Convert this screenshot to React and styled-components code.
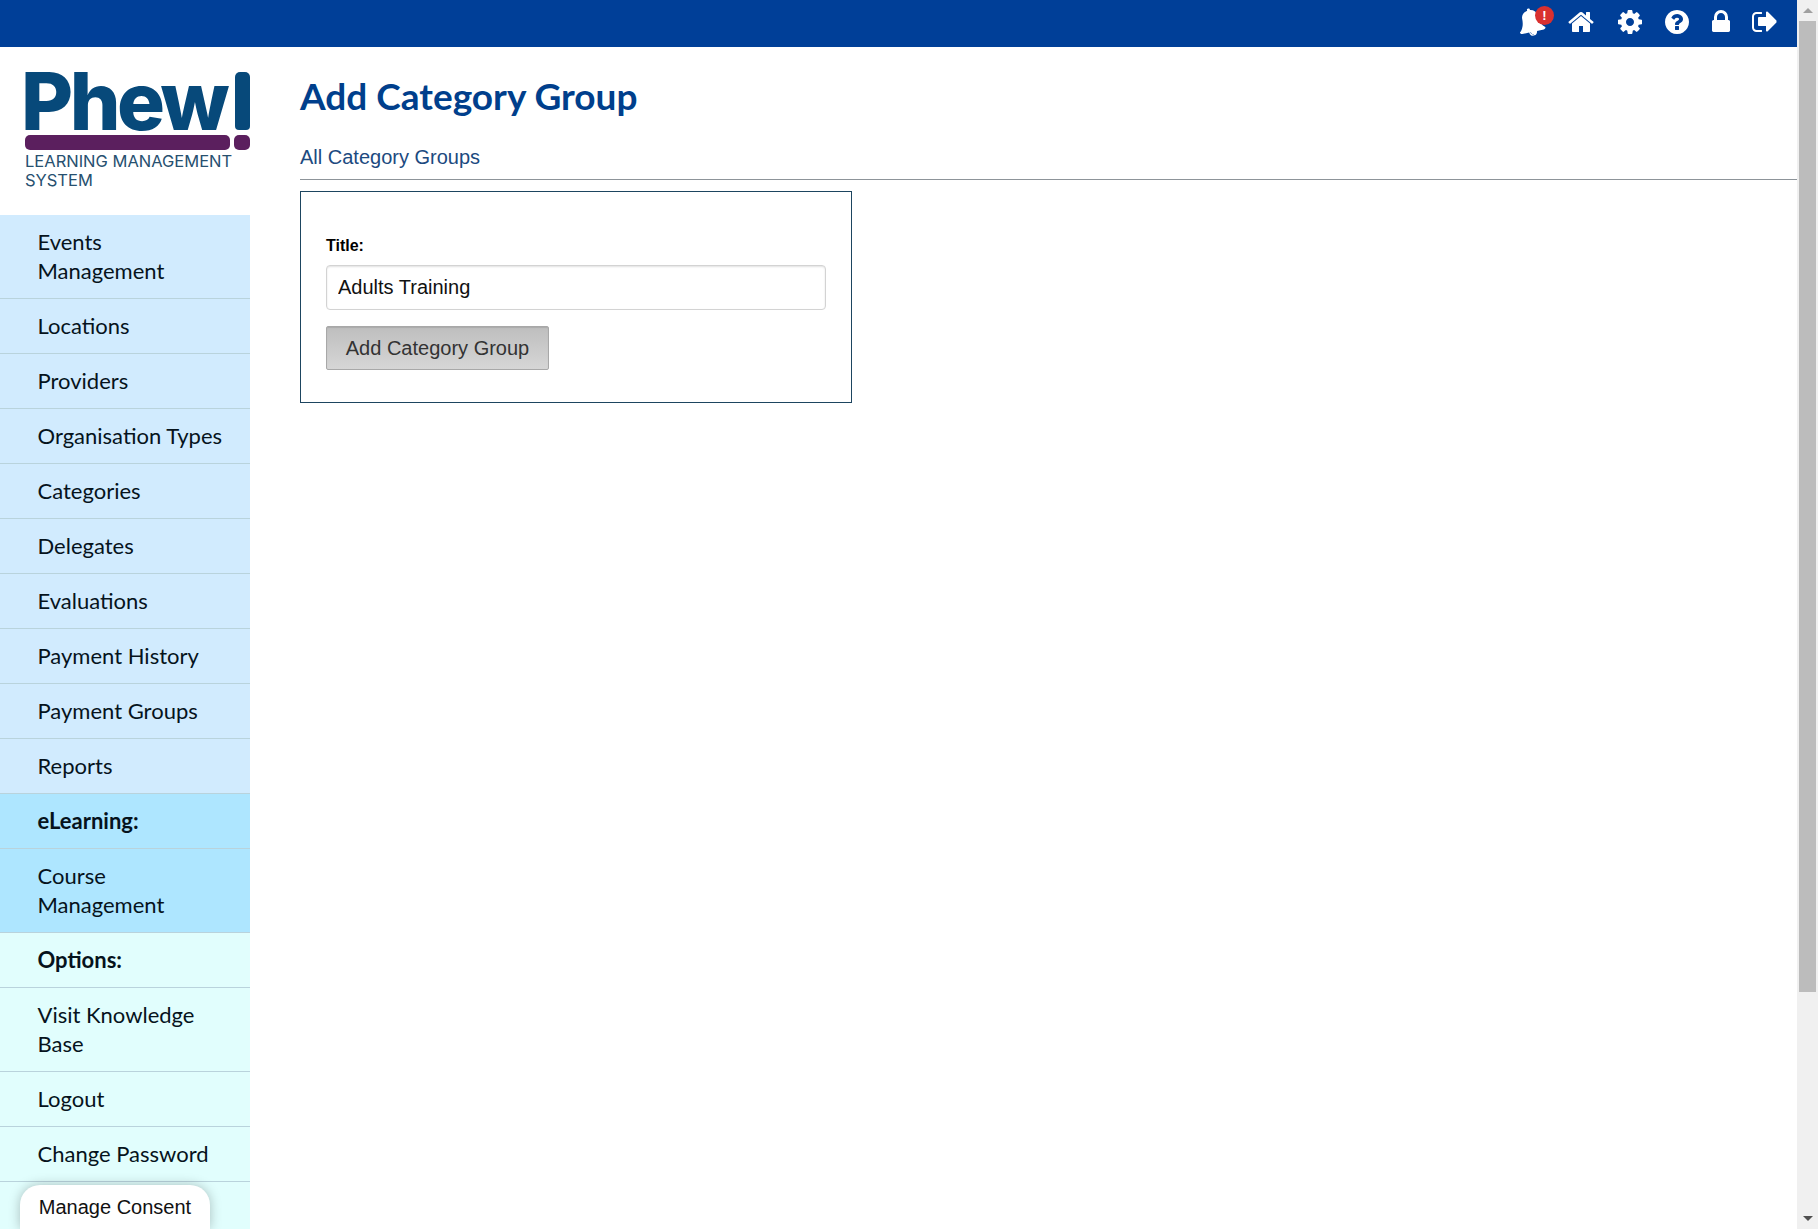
import React from "react";
import styled, { createGlobalStyle } from "styled-components";

const GlobalStyle = createGlobalStyle`
  html, body {
    margin: 0;
    padding: 0;
    height: 100%;
    overflow: hidden;
    background: #fff;
  }
  * {
    box-sizing: border-box;
  }
`;

const Page = styled.div`
  position: relative;
  display: flex;
  width: 1818px;
  height: 1229px;
  overflow: hidden;
  font-family: "Liberation Sans", Arial, sans-serif;
`;

const Window = styled.div`
  flex: 1;
  min-width: 0;
  display: flex;
  flex-direction: column;
`;

const TopBar = styled.header`
  height: 47px;
  flex: none;
  background: #003f98;
  display: flex;
  justify-content: flex-end;
  align-items: center;
  padding: 0 18px 3px 0;
  color: #fff;
`;

const IconSlot = styled.span`
  position: relative;
  display: flex;
  margin-left: ${(p) => p.$gap || 0}px;
`;

const Glyph = styled.svg`
  width: 28px;
  height: 28px;
  fill: currentColor;
  transform: ${(p) => (p.$tilt ? "rotate(-12deg)" : "none")};
`;

const Badge = styled.span`
  position: absolute;
  top: -2px;
  right: -9px;
  width: 19px;
  height: 19px;
  border-radius: 50%;
  background: #d9302f;
  color: #fff;
  font-size: 13px;
  font-weight: bold;
  line-height: 19px;
  text-align: center;
`;

const Body = styled.div`
  flex: 1;
  min-height: 0;
  display: flex;
`;

const Sidebar = styled.nav`
  width: 250px;
  flex: none;
  background: #e1fefd;
  display: flex;
  flex-direction: column;
`;

const LogoBox = styled.div`
  height: 168px;
  flex: none;
  background: #fff;
  padding: 25px 0 0 25px;
  color: #07497a;
`;

const LogoTop = styled.div`
  display: flex;
  align-items: flex-end;
  width: 225px;
  height: 58px;
`;

const LogoWord = styled.div`
  flex: 1;
  margin-left: -4px;
  font-family: Inter, sans-serif;
  font-weight: 800;
  font-size: 80px;
  line-height: 58px;
  letter-spacing: -3.5px;
`;

const LogoStem = styled.span`
  width: 15px;
  height: 58px;
  flex: none;
  background: #07497a;
  border-radius: 5px 5px 4px 4px;
`;

const LogoBars = styled.div`
  display: flex;
  gap: 4px;
  width: 225px;
  margin: 5px 0 2px;
`;

const LogoBar = styled.span`
  height: 15px;
  flex: ${(p) => (p.$dot ? "none" : "1")};
  width: ${(p) => (p.$dot ? "16px" : "auto")};
  background: #5b1f5e;
  border-radius: 5px;
`;

const LogoText = styled.div`
  font-family: Inter, sans-serif;
  font-size: 16.5px;
  line-height: 19px;
  width: 225px;
  color: #27506f;
`;

const NavItem = styled.a`
  display: block;
  padding: 12px 22px 13px 37.5px;
  font-family: Lato, "Open Sans", sans-serif;
  font-size: 22px;
  line-height: 29px;
  color: #06131c;
  font-weight: ${(p) => (p.$head ? 700 : 400)};
  background: ${(p) =>
    p.$tone === "learn" ? "#aee6ff" : p.$tone === "options" ? "#e1fefd" : "#d1ebfe"};
  border-bottom: 1px solid #b9d3dc;
`;

const Content = styled.main`
  flex: 1;
  min-width: 0;
  padding: 24px 0 0 50px;
`;

const Title = styled.h1`
  margin: 0;
  font-family: Lato, "Open Sans", sans-serif;
  font-size: 37px;
  line-height: 50px;
  font-weight: 700;
  color: #003f8c;
`;

const BackLink = styled.a`
  display: block;
  margin-top: 24px;
  font-size: 20px;
  line-height: 24px;
  color: #1c4a80;
`;

const Rule = styled.hr`
  margin: 10px 0 11px;
  border: 0;
  border-top: 1px solid #8d9499;
`;

const FormBox = styled.form`
  width: 552px;
  height: 212px;
  border: 1px solid #1d4560;
  padding: 44px 25px 0;
`;

const Label = styled.label`
  display: block;
  font-size: 16px;
  line-height: 20px;
  font-weight: bold;
  color: #000;
  margin-bottom: 9px;
`;

const TextInput = styled.input`
  display: block;
  width: 500px;
  height: 45px;
  padding: 0 11px;
  font-family: "Liberation Sans", Arial, sans-serif;
  font-size: 20px;
  color: #111;
  background: #fff;
  border: 1px solid #d3d3d3;
  border-radius: 4px;
  box-shadow: inset 0 1px 2px rgba(0, 0, 0, 0.12);
  outline: none;
`;

const Submit = styled.button`
  display: block;
  margin-top: 16px;
  width: 223px;
  height: 44px;
  padding: 0;
  font-family: "Liberation Sans", Arial, sans-serif;
  font-size: 20px;
  color: #333;
  background: linear-gradient(#bebebe, #d6d6d6);
  border: 1px solid #a8a8a8;
  border-radius: 2px;
  box-shadow: inset 0 1px 1px rgba(0, 0, 0, 0.1);
`;

const Scrollbar = styled.div`
  width: 21px;
  flex: none;
  background: #f0f0f0;
  display: flex;
  flex-direction: column;
  align-items: center;
  padding: 0 2px;
`;

const ScrollArrow = styled.span`
  flex: none;
  height: 21px;
  display: flex;
  align-items: center;
  justify-content: center;
  &::before {
    content: "";
    border-left: 5px solid transparent;
    border-right: 5px solid transparent;
    ${(p) => (p.$down ? "border-top: 5px solid #505050;" : "border-bottom: 5px solid #a0a0a0;")}
  }
`;

const ScrollThumb = styled.div`
  width: 100%;
  height: 971px;
  flex: none;
  background: #bcbcbc;
`;

const ScrollSpacer = styled.div`
  flex: 1;
`;

const ConsentTab = styled.button`
  position: absolute;
  left: 20px;
  bottom: 0;
  width: 190px;
  height: 44px;
  padding: 0;
  background: #fff;
  border: 0;
  border-radius: 20px 20px 0 0;
  box-shadow: 0 0 12px rgba(0, 0, 0, 0.25);
  font-family: "Liberation Sans", Arial, sans-serif;
  font-size: 20px;
  color: #111;
`;

// Font Awesome 4 shapes, the set the site's toolbar uses
const icons = {
  bell: "M912 1696q0-16-16-16-59 0-101.500-42.500T752 1536q0-16-16-16t-16 16q0 73 51.500 124.500T896 1712q16 0 16-16zm816-288q0 52-38 90t-90 38h-448q0 106-75 181t-181 75-181-75-75-181H192q-52 0-90-38t-38-90q50-42 91-88t85-119.500 74.500-158.500 50-206T384 576q0-152 117-282.500T808 135q-8-19-8-39 0-40 28-68t68-28 68 28 28 68q0 20-8 39 190 28 307 158.500T1408 576q0 139 19.500 260t50 206 74.500 158.500 85 119.500 91 88z",
  home: "M1472 992v480q0 26-19 45t-45 19h-384v-384H768v384H384q-26 0-45-19t-19-45V992q0-1 .5-3t.5-3l575-474 575 474q1 2 1 6zm223-69l-62 74q-8 9-21 11h-3q-13 0-21-7L896 424l-692 577q-12 8-24 7-13-2-21-11l-62-74q-8-10-7-23.500t11-21.500l719-599q32-26 76-26t76 26l244 204V288q0-14 9-23t23-9h192q14 0 23 9t9 23v408l219 182q10 8 11 21.500t-7 23.500z",
  cog: "M1152 896q0-106-75-181t-181-75-181 75-75 181 75 181 181 75 181-75 75-181zm512-109v222q0 12-8 23t-20 13l-185 28q-19 54-39 91 35 50 107 138 10 12 10 25t-9 23q-27 37-99 108t-94 71q-12 0-26-9l-138-108q-44 23-91 38-16 136-29 186-7 28-36 28H785q-14 0-24.500-8.500T749 1634l-28-184q-49-16-90-37l-141 107q-10 9-25 9-14 0-25-11-126-114-165-168-7-10-7-23 0-12 8-23 15-21 51-66.500t54-70.500q-27-50-41-99l-183-27q-13-2-21-12.500T128 1004V782q0-12 8-23t19-13l186-28q14-46 39-92-40-57-107-138-10-12-10-24 0-10 9-23 26-36 98.500-107.500T465 263q13 0 26 10l138 107q44-23 91-38 16-136 29-186 7-28 36-28h222q14 0 24.500 8.500T1043 158l28 184q49 16 90 37l142-107q9-9 24-9 13 0 25 10 129 119 165 170 7 8 7 22 0 12-8 23-15 21-51 66.500t-54 70.500q26 50 41 98l183 28q13 2 21 12.500t8 24.500z",
  question: "M1024 1376v-192q0-14-9-23t-23-9H800q-14 0-23 9t-9 23v192q0 14 9 23t23 9h192q14 0 23-9t9-23zm256-672q0-88-55.500-163T1086 425t-170-41q-243 0-371 213-15 24 8 42l132 100q7 6 19 6 16 0 25-12 53-68 86-92 34-24 86-24 48 0 85.500 26t37.500 59q0 38-20 61t-68 45q-63 28-115.500 86.500T768 1020v36q0 14 9 23t23 9h192q14 0 23-9t9-23q0-19 21.500-49.500T1100 957q32-18 49-28.500t46-35 44.500-48 28-60.500 12.500-81zm384 192q0 209-103 385.500T1281.500 1561 896 1664t-385.500-103T231 1281.500 128 896t103-385.500T510.500 231 896 128t385.500 103T1561 510.500 1664 896z",
  lock: "M640 768h512V576q0-106-75-181t-181-75-181 75-75 181v192zm832 96v576q0 40-28 68t-68 28H416q-40 0-68-28t-28-68V864q0-40 28-68t68-28h32V576q0-184 132-316t316-132 316 132 132 316v192h32q40 0 68 28t28 68z",
  signOut: "M704 1440q0 4 1 20t.5 26.500-3 23.500-10 19.500-20.500 6.500H352q-119 0-203.500-84.500T64 1248V544q0-119 84.500-203.500T352 256h320q13 0 22.500 9.500T704 288q0 4 1 20t.5 26.500-3 23.500-10 19.500-20.500 6.500H352q-66 0-113 47t-47 113v704q0 66 47 113t113 47h312l11.500 1 11.500 3 8 5.500 7 9 2 13.500zm928-544q0 26-19 45l-544 544q-19 19-45 19t-45-19-19-45v-288H512q-26 0-45-19t-19-45V640q0-26 19-45t45-19h448V288q0-26 19-45t45-19 45 19l544 544q19 19 19 45z",
};

const Icon = ({ name, tilt }) => (
  <Glyph viewBox="0 0 1792 1792" $tilt={tilt}>
    <path d={icons[name]} />
  </Glyph>
);

const mainLinks = [
  "Events Management",
  "Locations",
  "Providers",
  "Organisation Types",
  "Categories",
  "Delegates",
  "Evaluations",
  "Payment History",
  "Payment Groups",
  "Reports",
];

const optionLinks = ["Visit Knowledge Base", "Logout", "Change Password"];

export default function App() {
  return (
    <Page>
      <GlobalStyle />
      <Window>
        <TopBar>
          <IconSlot>
            <Icon name="bell" tilt />
            <Badge>!</Badge>
          </IconSlot>
          <IconSlot $gap={22}>
            <Icon name="home" />
          </IconSlot>
          <IconSlot $gap={21}>
            <Icon name="cog" />
          </IconSlot>
          <IconSlot $gap={19}>
            <Icon name="question" />
          </IconSlot>
          <IconSlot $gap={16}>
            <Icon name="lock" />
          </IconSlot>
          <IconSlot $gap={16}>
            <Icon name="signOut" />
          </IconSlot>
        </TopBar>
        <Body>
          <Sidebar>
            <LogoBox>
              <LogoTop>
                <LogoWord>Phew</LogoWord>
                <LogoStem />
              </LogoTop>
              <LogoBars>
                <LogoBar />
                <LogoBar $dot />
              </LogoBars>
              <LogoText>LEARNING MANAGEMENT SYSTEM</LogoText>
            </LogoBox>
            {mainLinks.map((link) => (
              <NavItem key={link}>{link}</NavItem>
            ))}
            <NavItem $tone="learn" $head>
              eLearning:
            </NavItem>
            <NavItem $tone="learn">Course Management</NavItem>
            <NavItem $tone="options" $head>
              Options:
            </NavItem>
            {optionLinks.map((link) => (
              <NavItem key={link} $tone="options">
                {link}
              </NavItem>
            ))}
          </Sidebar>
          <Content>
            <Title>Add Category Group</Title>
            <BackLink>All Category Groups</BackLink>
            <Rule />
            <FormBox>
              <Label htmlFor="title">Title:</Label>
              <TextInput id="title" defaultValue="Adults Training" />
              <Submit type="button">Add Category Group</Submit>
            </FormBox>
          </Content>
        </Body>
      </Window>
      <Scrollbar>
        <ScrollArrow />
        <ScrollThumb />
        <ScrollSpacer />
        <ScrollArrow $down />
      </Scrollbar>
      <ConsentTab type="button">Manage Consent</ConsentTab>
    </Page>
  );
}
